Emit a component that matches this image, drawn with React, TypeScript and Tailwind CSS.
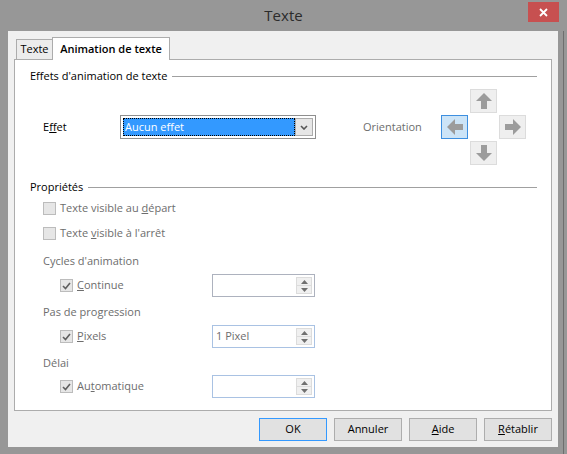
import React from 'react';

const font = { fontFamily: '"Open Sans", "Noto Sans", sans-serif' };

function GroupHeader({ label }: { label: string }) {
  return (
    <div className="flex items-center h-[16px] pl-[15px] pr-[14px]">
      <span className="text-[11px] text-black whitespace-nowrap">{label}</span>
      <div className="flex-1 h-px bg-[#a0a0a0] ml-[5px]" />
    </div>
  );
}

function Check({ checked }: { checked?: boolean }) {
  return (
    <div className="w-[13px] h-[13px] shrink-0 border border-[#bcbcbc] bg-[#e6e6e6] flex items-center justify-center">
      {checked && (
        <svg width="9" height="8" viewBox="0 0 9 8">
          <path d="M1 4 L3.5 6.5 L8 1" fill="none" stroke="#5f5f5f" strokeWidth="1.6" />
        </svg>
      )}
    </div>
  );
}

function SpinBox({ value, border }: { value?: string; border: string }) {
  return (
    <div className={`w-[103px] h-[23px] border ${border} bg-white flex items-center`}>
      <span className="flex-1 pl-[3px] text-[11px] text-[#6d6d6d]">{value}</span>
      <div className="w-[16px] h-[17px] mr-[2px] border border-[#dcdcdc] bg-[#f0f0f0] flex flex-col">
        <div className="flex-1 flex items-center justify-center border-b border-[#dcdcdc]">
          <svg width="7" height="4" viewBox="0 0 7 4"><path d="M3.5 0 L7 4 L0 4 Z" fill="#707070" /></svg>
        </div>
        <div className="flex-1 flex items-center justify-center">
          <svg width="7" height="4" viewBox="0 0 7 4"><path d="M0 0 L7 0 L3.5 4 Z" fill="#707070" /></svg>
        </div>
      </div>
    </div>
  );
}

function Arrow({ dir, active }: { dir: 'up' | 'down' | 'left' | 'right'; active?: boolean }) {
  const rot = { up: 0, right: 90, down: 180, left: 270 }[dir];
  return (
    <div
      className={
        active
          ? 'w-[27px] h-[24px] border border-[#3d8fe0] bg-[#cce4f7] flex items-center justify-center'
          : 'w-[27px] h-[24px] border border-[#dcdcdc] bg-[#efefef] flex items-center justify-center'
      }
    >
      <svg width="18" height="18" viewBox="0 0 18 18" style={{ transform: `rotate(${rot}deg)` }}>
        <path d="M9 1 L17 9 L12 9 L12 17 L6 17 L6 9 L1 9 Z" fill="#9c9c9c" />
      </svg>
    </div>
  );
}

function DlgButton({ children, def }: { children: React.ReactNode; def?: boolean }) {
  return (
    <div
      className={
        'w-[68px] h-[23px] flex items-center justify-center text-[11px] text-black bg-[#e1e1e1] border ' +
        (def ? 'border-[#3399ff]' : 'border-[#adadad]')
      }
    >
      {children}
    </div>
  );
}

export default function App() {
  return (
    <div className="w-[567px] h-[454px] bg-[#979797] flex flex-col overflow-hidden relative" style={font}>
      {/* title bar */}
      <div className="h-[31px] flex items-center justify-center">
        <span className="text-[15px] text-[#2b2b2b] -mt-[1px]">Texte</span>
      </div>
      <div className="absolute top-[2px] left-[528px] w-[31px] h-[20px] bg-[#c75050] flex items-center justify-center">
        <svg width="9" height="9" viewBox="0 0 9 9">
          <path d="M1 1 L8 8 M8 1 L1 8" stroke="#fff" strokeWidth="1.8" />
        </svg>
      </div>
      <div className="absolute top-[31px] left-[563px] w-px h-[423px] bg-[#6e6e6e]" />

      {/* content */}
      <div className="ml-[8px] w-[550px] h-[416px] bg-[#f0f0f0] flex flex-col">
        <div className="ml-[6px] mt-[6px] w-[538px]">
          {/* tabs */}
          <div className="flex items-end h-[22px] pl-[2px]">
            <div className="h-[20px] w-[37px] border border-b-0 border-[#acacac] bg-[#ececec] flex items-center justify-center text-[11px] text-black">
              Texte
            </div>
            <div className="h-[23px] -mb-px -ml-px relative z-10 w-[118px] border border-b-0 border-[#acacac] bg-white flex items-center justify-center text-[11px] text-black font-semibold">
              Animation de texte
            </div>
          </div>

          {/* panel */}
          <div className="h-[352px] bg-white border border-[#acacac] flex flex-col">
            <div className="mt-[8px]">
              <GroupHeader label="Effets d'animation de texte" />
            </div>

            <div className="mt-[5px] flex items-center pl-[28px]">
              <span className="w-[77px] text-[11px] text-black">
                E<span className="underline">f</span>fet
              </span>
              <div className="w-[196px] h-[24px] border border-[#8f8f8f] bg-white p-[2px] flex">
                <div className="flex-1 bg-[#3399ff] border border-dotted border-black flex items-center pl-[1px]">
                  <span className="text-[11px] text-white">Aucun effet</span>
                </div>
                <div className="w-[18px] border border-[#acacac] bg-[#e6e6e6] flex items-center justify-center">
                  <svg width="8" height="5" viewBox="0 0 8 5">
                    <path d="M1 1 L4 4 L7 1" fill="none" stroke="#555" strokeWidth="1.6" />
                  </svg>
                </div>
              </div>
              <span className="ml-[47px] w-[78px] text-[11px] text-[#6d6d6d]">Orientation</span>
              <div className="flex flex-col gap-[2px]">
                <div className="flex gap-[2px]">
                  <div className="w-[27px]" />
                  <Arrow dir="up" />
                </div>
                <div className="flex gap-[2px]">
                  <Arrow dir="left" active />
                  <div className="w-[27px]" />
                  <Arrow dir="right" />
                </div>
                <div className="flex gap-[2px]">
                  <div className="w-[27px]" />
                  <Arrow dir="down" />
                </div>
              </div>
            </div>

            <div className="mt-[14px]">
              <GroupHeader label="Propriétés" />
            </div>

            <div className="mt-[5px] h-[16px] flex items-center gap-[4px] pl-[28px] text-[11px] text-[#6d6d6d]">
              <Check />
              <span>
                Texte visible au <span className="underline">d</span>épart
              </span>
            </div>
            <div className="mt-[9px] h-[16px] flex items-center gap-[4px] pl-[28px] text-[11px] text-[#6d6d6d]">
              <Check />
              <span>
                Texte <span className="underline">v</span>isible à l'arrêt
              </span>
            </div>

            <div className="mt-[12px] h-[16px] flex items-center pl-[28px] text-[11px] text-[#6d6d6d]">
              Cycles d'animation
            </div>
            <div className="mt-[5px] flex items-center pl-[45px] text-[11px] text-[#6d6d6d]">
              <div className="w-[152px] flex items-center gap-[4px]">
                <Check checked />
                <span>
                  <span className="underline">C</span>ontinue
                </span>
              </div>
              <SpinBox border="border-[#adb2be]" />
            </div>

            <div className="mt-[7px] h-[16px] flex items-center pl-[28px] text-[11px] text-[#6d6d6d]">
              Pas de progression
            </div>
            <div className="mt-[5px] flex items-center pl-[45px] text-[11px] text-[#6d6d6d]">
              <div className="w-[152px] flex items-center gap-[4px]">
                <Check checked />
                <span>
                  <span className="underline">P</span>ixels
                </span>
              </div>
              <SpinBox value="1 Pixel" border="border-[#a9c2e3]" />
            </div>

            <div className="mt-[7px] h-[16px] flex items-center pl-[28px] text-[11px] text-[#6d6d6d]">
              Délai
            </div>
            <div className="mt-[4px] flex items-center pl-[45px] text-[11px] text-[#6d6d6d]">
              <div className="w-[152px] flex items-center gap-[4px]">
                <Check checked />
                <span>
                  Au<span className="underline">t</span>omatique
                </span>
              </div>
              <SpinBox border="border-[#a9c2e3]" />
            </div>
          </div>
        </div>

        {/* buttons */}
        <div className="mt-[7px] flex justify-end gap-[7px] pr-[6px]">
          <DlgButton def>OK</DlgButton>
          <DlgButton>Annuler</DlgButton>
          <DlgButton>
            <span className="underline">A</span>ide
          </DlgButton>
          <DlgButton>
            <span className="underline">R</span>établir
          </DlgButton>
        </div>
      </div>
    </div>
  );
}
